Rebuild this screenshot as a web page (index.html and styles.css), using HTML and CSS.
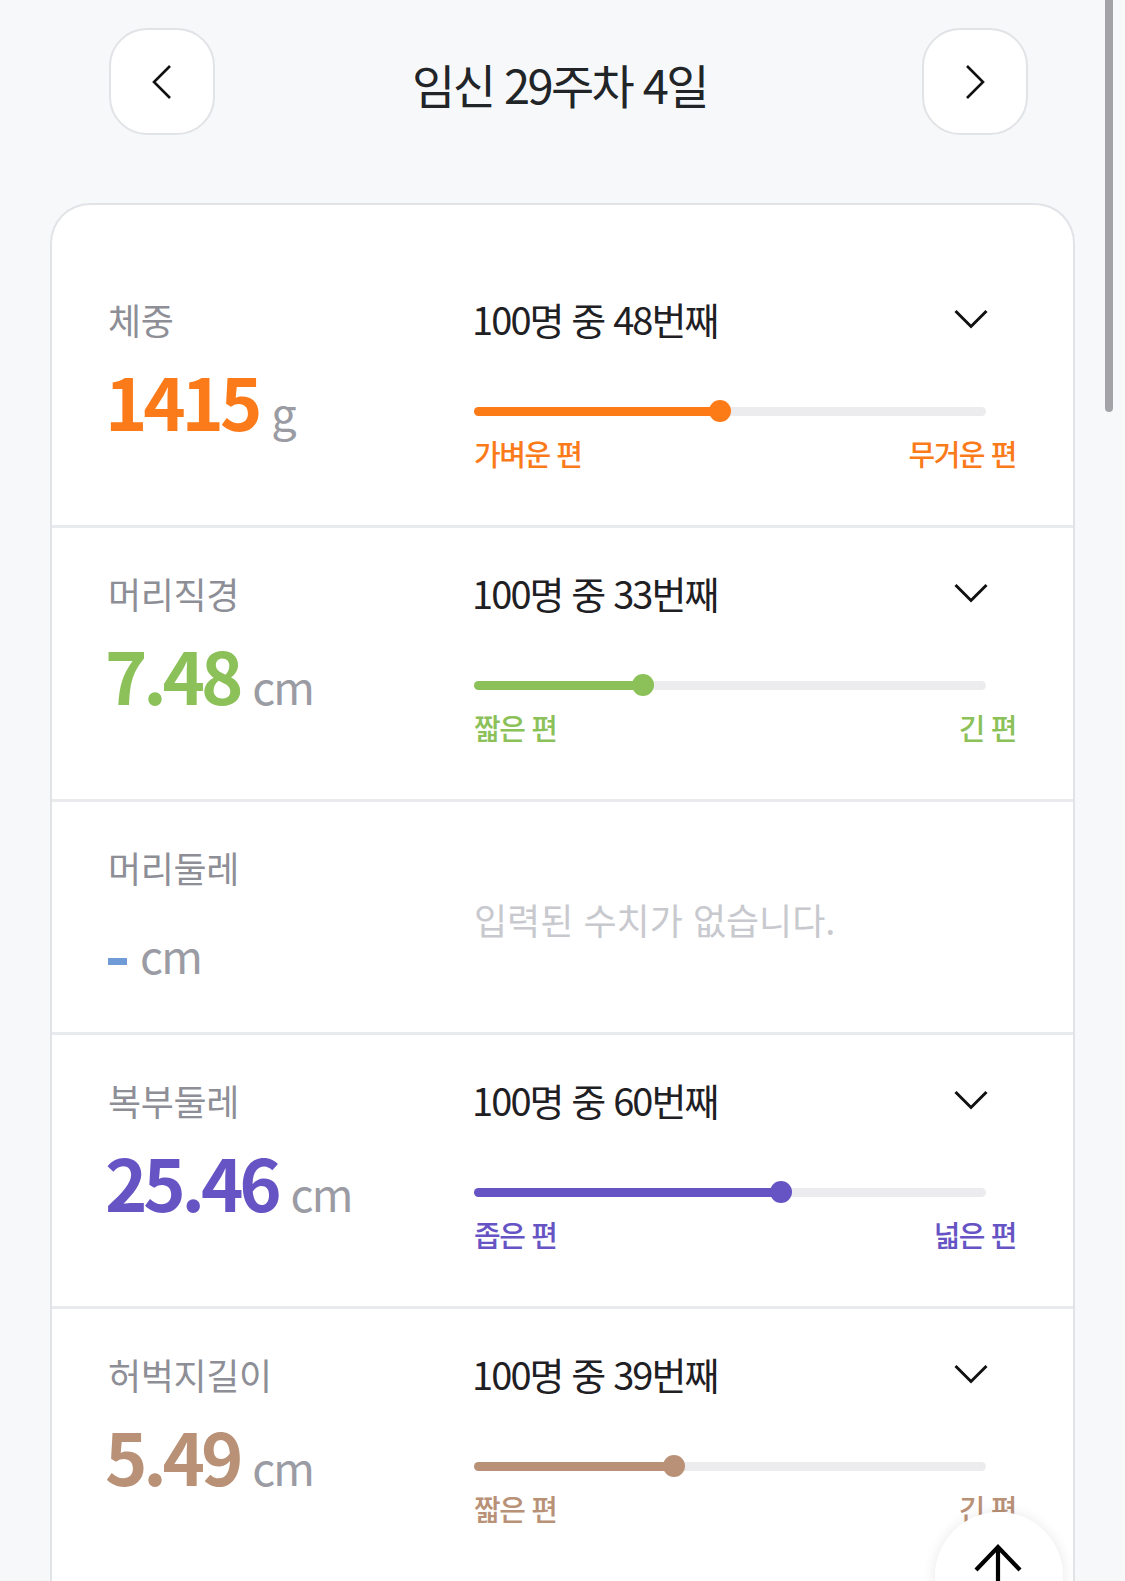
FILE: index.html
```html
<!doctype html>
<html lang="ko">
<head>
	<meta charset="utf-8">
	<title>임신 29주차 4일</title>
	<link rel="stylesheet" href="styles.css">
</head>
<body>

<header class="week-nav">
	<button class="nav-btn" type="button" aria-label="이전 주">
		<svg width="24" height="36" viewBox="0 0 24 36"><path d="M20 2 L4 18 L20 34" fill="none" stroke="#111" stroke-width="2.6"/></svg>
	</button>
	<h1 class="week-title">임신 29주차 4일</h1>
	<button class="nav-btn" type="button" aria-label="다음 주">
		<svg width="24" height="36" viewBox="0 0 24 36"><path d="M4 2 L20 18 L4 34" fill="none" stroke="#111" stroke-width="2.6"/></svg>
	</button>
</header>

<section class="card">

	<div class="metric orange">
		<div class="metric-main">
			<div class="metric-label">체중</div>
			<div class="metric-value"><span class="num">1415</span><span class="unit">g</span></div>
		</div>
		<div class="metric-rank">
			<div class="rank-head">
				<span class="rank-text">100명 중 48번째</span>
				<svg class="rank-toggle" width="34" height="20" viewBox="0 0 34 20"><path d="M1.5 2 L17 17.5 L32.5 2" fill="none" stroke="#111" stroke-width="3"/></svg>
			</div>
			<div class="slider">
				<div class="slider-fill" style="width: 48%"></div>
				<div class="slider-knob" style="left: 48%"></div>
			</div>
			<div class="slider-ends"><span>가벼운 편</span><span>무거운 편</span></div>
		</div>
	</div>

	<div class="metric green">
		<div class="metric-main">
			<div class="metric-label">머리직경</div>
			<div class="metric-value"><span class="num">7.48</span><span class="unit">cm</span></div>
		</div>
		<div class="metric-rank">
			<div class="rank-head">
				<span class="rank-text">100명 중 33번째</span>
				<svg class="rank-toggle" width="34" height="20" viewBox="0 0 34 20"><path d="M1.5 2 L17 17.5 L32.5 2" fill="none" stroke="#111" stroke-width="3"/></svg>
			</div>
			<div class="slider">
				<div class="slider-fill" style="width: 33%"></div>
				<div class="slider-knob" style="left: 33%"></div>
			</div>
			<div class="slider-ends"><span>짧은 편</span><span>긴 편</span></div>
		</div>
	</div>

	<div class="metric blue empty">
		<div class="metric-main">
			<div class="metric-label">머리둘레</div>
			<div class="metric-value"><span class="num dash"></span><span class="unit">cm</span></div>
		</div>
		<div class="metric-rank">
			<p class="no-data">입력된 수치가 없습니다.</p>
		</div>
	</div>

	<div class="metric purple">
		<div class="metric-main">
			<div class="metric-label">복부둘레</div>
			<div class="metric-value"><span class="num">25.46</span><span class="unit">cm</span></div>
		</div>
		<div class="metric-rank">
			<div class="rank-head">
				<span class="rank-text">100명 중 60번째</span>
				<svg class="rank-toggle" width="34" height="20" viewBox="0 0 34 20"><path d="M1.5 2 L17 17.5 L32.5 2" fill="none" stroke="#111" stroke-width="3"/></svg>
			</div>
			<div class="slider">
				<div class="slider-fill" style="width: 60%"></div>
				<div class="slider-knob" style="left: 60%"></div>
			</div>
			<div class="slider-ends"><span>좁은 편</span><span>넓은 편</span></div>
		</div>
	</div>

	<div class="metric brown">
		<div class="metric-main">
			<div class="metric-label">허벅지길이</div>
			<div class="metric-value"><span class="num">5.49</span><span class="unit">cm</span></div>
		</div>
		<div class="metric-rank">
			<div class="rank-head">
				<span class="rank-text">100명 중 39번째</span>
				<svg class="rank-toggle" width="34" height="20" viewBox="0 0 34 20"><path d="M1.5 2 L17 17.5 L32.5 2" fill="none" stroke="#111" stroke-width="3"/></svg>
			</div>
			<div class="slider">
				<div class="slider-fill" style="width: 39%"></div>
				<div class="slider-knob" style="left: 39%"></div>
			</div>
			<div class="slider-ends"><span>짧은 편</span><span>긴 편</span></div>
		</div>
	</div>

</section>

<div class="scroll-thumb"></div>

<button class="to-top" type="button" aria-label="맨 위로">
	<svg width="128" height="128" viewBox="0 0 128 128"><path d="M41 58 L63 35 L85 58 M63 35 L63 128" fill="none" stroke="#000" stroke-width="4.2"/></svg>
</button>

</body>
</html>
```

FILE: styles.css
```css
html, body {margin: 0; padding: 0;}
body {
	background: #f7f8fa;
	font-family: "Noto Sans CJK KR", "Noto Sans", sans-serif;
	color: #1f2024;
	height: 1581px;
	overflow: hidden;
}
button {font-family: inherit; cursor: pointer;}

/* week navigation */
.week-nav {display: flex; align-items: center; padding: 28px 97px 0 109px;}
.nav-btn {width: 106px; height: 107px; border: 2px solid #e2e3e6; border-radius: 38px; background: #fff; display: flex; align-items: center; justify-content: center; padding: 0;}
.week-title {flex: 1; margin: 4px 0 0; padding-right: 18px; text-align: center; font-size: 47px; font-weight: 400; letter-spacing: -0.055em; color: #222528; line-height: 60px;}

/* card */
.card {margin: 68px 50px 0; background: #fff; border: 2px solid #e2e3e7; border-bottom: 0; border-radius: 40px 40px 0 0; padding: 49px 0 80px;}

.metric {display: flex; padding: 41px 57px 54px 56px; border-bottom: 3px solid #e9eaee;}
.metric:last-child {border-bottom: 0;}
.metric-main {width: 366px; flex-shrink: 0;}
.metric-label {font-size: 36px; line-height: 48px; color: #8d8e96; letter-spacing: -0.01em;}
.metric-value {margin-top: 17px; height: 80px; display: flex; align-items: baseline; line-height: 80px;}
.metric-value .num {font-size: 72px; font-weight: 700; letter-spacing: -0.058em; margin-left: -3px;}
.metric-value .unit {font-size: 45px; color: #9a9ba3; margin-left: 13px; letter-spacing: -0.04em;}

.metric-rank {flex: 1;}
.rank-head {display: flex; justify-content: space-between; align-items: center; height: 48px; padding-right: 28px;}
.rank-text {font-size: 38px; line-height: 48px; letter-spacing: -0.05em; margin-left: -2px;}
.rank-toggle {display: block;}

.slider {position: relative; width: 512px; height: 22px; margin-top: 57px;}
.slider::before {content: ""; position: absolute; left: 0; right: 0; top: 7px; height: 9px; border-radius: 5px; background: #ececee;}
.slider-fill {position: absolute; left: 0; top: 7px; height: 9px; border-radius: 5px;}
.slider-knob {position: absolute; top: 0; width: 22px; height: 22px; margin-left: -11px; border-radius: 50%;}

.slider-ends {display: flex; justify-content: space-between; margin-top: 13px; font-size: 29px; line-height: 36px; font-weight: 500; letter-spacing: -0.05em;}

/* empty row */
.metric.empty {padding-bottom: 37px;}
.metric.empty .metric-value {margin-top: 24px;}
.metric.empty .metric-rank {display: flex; align-items: center;}
.no-data {margin: 0; font-size: 36px; color: #c8c9ce; letter-spacing: 0;}
.num.dash {display: inline-block; width: 19px; height: 7px; background: #719bd7; align-self: center; margin: 12px 0 0;}
.metric.empty .unit {margin-left: 13px;}

/* colours */
.orange .num, .orange .slider-ends {color: #fb7b1b;}
.orange .slider-fill, .orange .slider-knob {background: #fd7b17;}
.green .num, .green .slider-ends {color: #8bc158;}
.green .slider-fill, .green .slider-knob {background: #8bc158;}
.purple .num, .purple .slider-ends {color: #6654c4;}
.purple .slider-fill, .purple .slider-knob {background: #6654c4;}
.brown .num, .brown .slider-ends {color: #b89177;}
.brown .slider-fill, .brown .slider-knob {background: #b89177;}

/* overlays */
.scroll-thumb {position: fixed; top: -8px; right: 12px; width: 8px; height: 420px; border-radius: 4px; background: #a4a4a8;}
.to-top {position: fixed; right: 62px; bottom: -59px; width: 128px; height: 128px; border-radius: 50%; border: 0; padding: 0; background: #fff; box-shadow: 0 0 14px rgba(0, 0, 0, 0.09);}
.to-top svg {display: block;}
```
